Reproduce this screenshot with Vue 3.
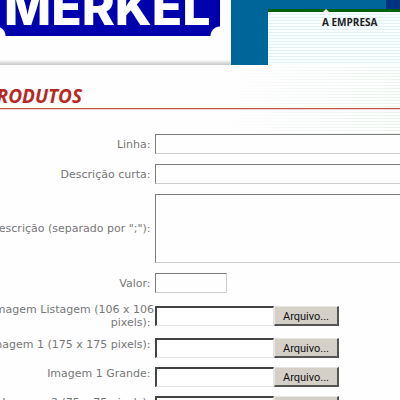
<script setup>
import { ref } from 'vue'

const files = ref([
  { id: 'listagem', lines: ['Imagem Listagem (106 x 106', 'pixels):\u00a0'], name: '' },
  { id: 'img1', lines: ['Imagem 1 (175 x 175 pixels):\u00a0'], name: '' },
  { id: 'img1g', lines: ['Imagem 1 Grande:\u00a0'], name: '' },
  { id: 'img2', lines: ['Imagem 2 (75 x 75 pixels):\u00a0'], name: '' },
])
const pickers = ref([])

function choose(i) {
  pickers.value[i].click()
}
function picked(i, e) {
  files.value[i].name = e.target.files[0]?.name ?? ''
}
</script>

<template>
  <div class="page">
    <header class="header">
      <div class="brand">
        <div class="logo"><span>MERKEL</span></div>
      </div>
      <div class="side"></div>
      <div class="menu">
        <div class="banner"><div class="banner-dark"></div></div>
        <nav class="nav">
          <a href="#empresa">A EMPRESA</a>
        </nav>
      </div>
    </header>

    <main class="content">
      <h1 class="title"><span>PRODUTOS</span></h1>

      <form class="form" @submit.prevent>
        <div class="row">
          <label for="linha">Linha:&nbsp;</label>
          <input id="linha" type="text" class="field wide" />
        </div>
        <div class="row">
          <label for="curta">Descrição curta:&nbsp;</label>
          <input id="curta" type="text" class="field wide" />
        </div>
        <div class="row">
          <label for="descricao">Descrição (separado por ";"):&nbsp;</label>
          <textarea id="descricao" class="field wide area"></textarea>
        </div>
        <div class="row">
          <label for="valor">Valor:&nbsp;</label>
          <input id="valor" type="text" class="field short" />
        </div>
        <div class="files">
          <div v-for="(f, i) in files" :key="f.id" class="row file-row" :class="{ tall: f.lines.length > 1 }">
            <label :for="f.id"><span v-for="l in f.lines" :key="l">{{ l }}</span></label>
            <div class="file">
              <input :id="f.id" type="text" class="file-name" readonly :value="f.name" />
              <button type="button" class="file-button" @click="choose(i)">Arquivo...</button>
              <input ref="pickers" type="file" hidden @change="picked(i, $event)" />
            </div>
          </div>
        </div>
      </form>
    </main>
  </div>
</template>

<style>
html,
body {
  background: #fefefe;
  overflow: hidden;
}
</style>

<style scoped>
.page {
  overflow: hidden;
  font: 11px/13px "DejaVu Sans", Verdana, sans-serif;
  color: #777;
}
.header {
  display: flex;
  height: 65px;
}
.brand {
  width: 231px;
  flex: none;
  box-sizing: border-box;
  background: linear-gradient(#fefefe 60px, #eee 61px, #c8c8c8 65px);
}
.logo {
  box-sizing: border-box;
  width: 224px;
  height: 36px;
  margin-left: -4px;
  padding-left: 8px;
  background:
    radial-gradient(circle at 0 100%, #fefefe 9px, #0000ac 10px) left / 50% 100% no-repeat,
    radial-gradient(circle at 100% 100%, #fefefe 9px, #0000ac 10px) right / 50% 100% no-repeat;
  display: flex;
  align-items: flex-end;
}
.logo span {
  font: 800 50px/58px Inter, sans-serif;
  color: #fff;
}
.side {
  width: 37px;
  flex: none;
  background: #006699;
}
.menu {
  flex: 1;
  display: flex;
  flex-direction: column;
}
.banner {
  height: 9px;
  background: #006699;
  display: flex;
  justify-content: flex-end;
}
.banner-dark {
  width: 14px;
  background: #003380;
}
.nav {
  position: relative;
  flex: 1;
  border-top: 3px solid #006210;
  padding: 4px 0 0 54px;
  background: repeating-linear-gradient(#f8fdfe 0 2px, #e2f2f6 2px 3px);
}
.nav::before {
  content: "";
  position: absolute;
  left: 55px;
  top: -3px;
  border: 3px solid transparent;
  border-top: 0;
  border-bottom-color: #fff;
}
.nav a {
  font: bold 10px/13px "Open Sans", sans-serif;
  color: #222;
  text-decoration: none;
}
.content {
  background:
    linear-gradient(100deg, #fefefe 55%, transparent 110%) top / 100% 72px no-repeat,
    repeating-linear-gradient(#fdfefd 0 2px, #e4f1e8 2px 3px) top / 100% 72px no-repeat;
}
.title {
  margin: 0;
  padding-top: 18px;
  height: 25px;
  border-bottom: 1px solid #b9564e;
  box-shadow: 0 1px #f0d4d0;
  display: flex;
}
.title span {
  margin-left: -15px;
  font: italic bold 19px/26px "Open Sans", sans-serif;
  color: #b52a25;
}
.form {
  display: flex;
  flex-direction: column;
  gap: 10px;
  padding-top: 25px;
}
.row {
  display: grid;
  grid-template-columns: 155px 1fr;
  align-items: center;
}
label {
  display: flex;
  flex-direction: column;
  align-items: flex-end;
  padding-right: 1px;
  white-space: nowrap;
}
.field {
  box-sizing: border-box;
  height: 20px;
  margin: 0;
  padding: 2px;
  border: 1px solid;
  border-color: #7c7c7c #ccc #ccc #7c7c7c;
  border-radius: 0;
  background: #fefefe;
  font: inherit;
}
.wide {
  margin-right: -8px;
}
.area {
  height: 69px;
  resize: none;
  display: block;
}
.short {
  width: 72px;
}
.files {
  display: flex;
  flex-direction: column;
  gap: 9px;
}
.file-row {
  align-items: start;
}
.file-row.tall {
  align-items: center;
}
.file {
  display: flex;
  height: 20px;
}
.file-name {
  box-sizing: border-box;
  width: 119px;
  margin: 0;
  padding: 1px;
  border: 1px solid;
  border-width: 2px 1px 1px 2px;
  border-color: #444 #e4e4e4 #e4e4e4 #444;
  background: #fff;
  font: inherit;
}
.file-button {
  width: 65px;
  padding: 2px 0 0;
  border: 1px solid;
  border-width: 1px 2px 2px 1px;
  border-color: #e8e6e2 #555 #555 #e8e6e2;
  background: #d4d0c8;
  color: #111;
  font: 11px/13px Roboto, sans-serif;
}
</style>
